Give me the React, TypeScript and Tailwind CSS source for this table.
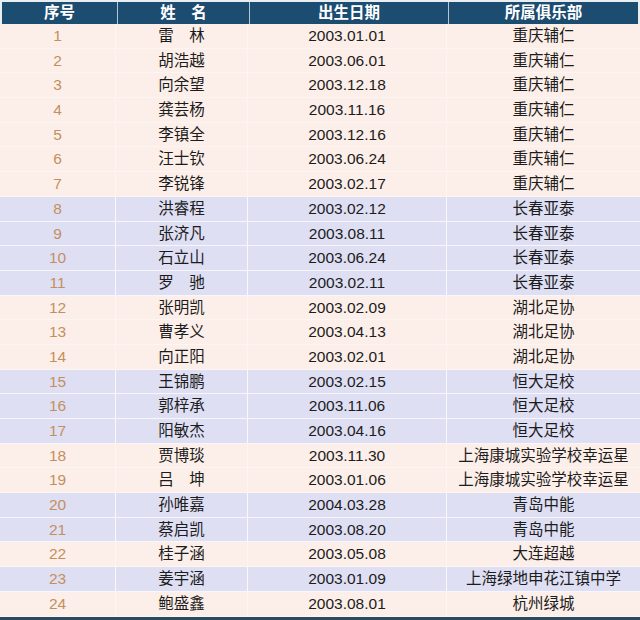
const rows: [string, string, string, string, boolean][] = [
  ["1", "雷　林", "2003.01.01", "重庆辅仁", false],
  ["2", "胡浩越", "2003.06.01", "重庆辅仁", false],
  ["3", "向余望", "2003.12.18", "重庆辅仁", false],
  ["4", "龚芸杨", "2003.11.16", "重庆辅仁", false],
  ["5", "李镇全", "2003.12.16", "重庆辅仁", false],
  ["6", "汪士钦", "2003.06.24", "重庆辅仁", false],
  ["7", "李锐锋", "2003.02.17", "重庆辅仁", false],
  ["8", "洪睿程", "2003.02.12", "长春亚泰", true],
  ["9", "张济凡", "2003.08.11", "长春亚泰", true],
  ["10", "石立山", "2003.06.24", "长春亚泰", true],
  ["11", "罗　驰", "2003.02.11", "长春亚泰", true],
  ["12", "张明凯", "2003.02.09", "湖北足协", false],
  ["13", "曹孝义", "2003.04.13", "湖北足协", false],
  ["14", "向正阳", "2003.02.01", "湖北足协", false],
  ["15", "王锦鹏", "2003.02.15", "恒大足校", true],
  ["16", "郭梓承", "2003.11.06", "恒大足校", true],
  ["17", "阳敏杰", "2003.04.16", "恒大足校", true],
  ["18", "贾博琰", "2003.11.30", "上海康城实验学校幸运星", false],
  ["19", "吕　坤", "2003.01.06", "上海康城实验学校幸运星", false],
  ["20", "孙唯嘉", "2004.03.28", "青岛中能", true],
  ["21", "蔡启凯", "2003.08.20", "青岛中能", true],
  ["22", "桂子涵", "2003.05.08", "大连超越", false],
  ["23", "姜宇涵", "2003.01.09", "上海绿地申花江镇中学", true],
  ["24", "鲍盛鑫", "2003.08.01", "杭州绿城", false],
];

const cols = "grid grid-cols-[115px_132px_199px_1fr]";

export default function App() {
  return (
    <div
      className="w-[640px] h-[620px] flex flex-col bg-[#fcefe9] overflow-hidden"
      style={{ fontFamily: '"Liberation Sans", "Noto Sans CJK SC", sans-serif' }}
    >
      <div className="h-[2px] bg-[#e9eef3]" />
      <div className={`${cols} h-[22px] bg-[#1d4c71] text-white font-bold text-[15.5px] leading-[22px] border-x-2 border-[#e9eef3]`}>
        <div className="text-center">序号</div>
        <div className="text-center border-l border-[#b5c7d6]">姓　名</div>
        <div className="text-center border-l border-[#b5c7d6]">出生日期</div>
        <div className="text-center border-l border-[#b5c7d6]">所属俱乐部</div>
      </div>
      {rows.map(([no, name, date, club, blue]) => (
        <div
          key={no}
          className={`${cols} h-[24.7px] text-[15.5px] leading-[24px] text-[#1c1c1c] border-b ${
            blue ? "bg-[#dfdff4] border-white/70" : "bg-[#fcefe9] border-white/40"
          }`}
        >
          <div className="text-center text-[#c48f5e]">{no}</div>
          <div className={`text-center border-l ${blue ? "border-white/80" : "border-white/40"}`}>{name}</div>
          <div className={`text-center border-l ${blue ? "border-white/80" : "border-white/40"}`}>{date}</div>
          <div className={`text-center border-l ${blue ? "border-white/80" : "border-white/40"}`}>{club}</div>
        </div>
      ))}
      <div className="flex-1 bg-[#2c4a5e]" />
    </div>
  );
}
